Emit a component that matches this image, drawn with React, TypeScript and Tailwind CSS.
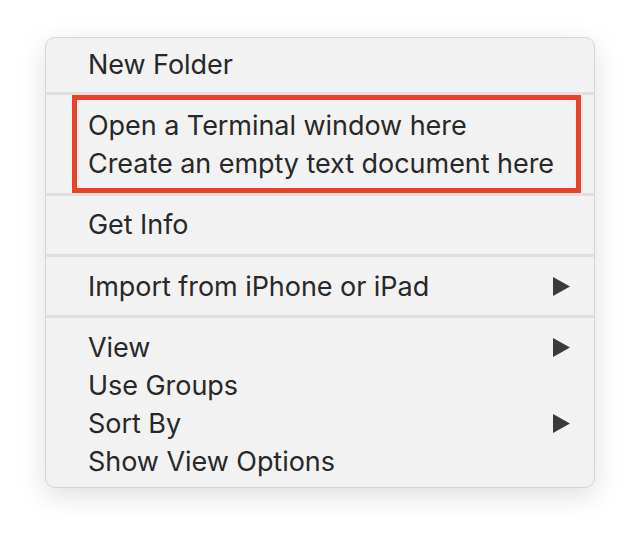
import { type ReactNode } from "react";

const font = { fontFamily: "Inter, 'Noto Sans', sans-serif" };

function Arrow() {
  return (
    <svg width="17" height="19" viewBox="0 0 17 19" className="shrink-0">
      <path d="M0 0 L17 9.5 L0 19 Z" fill="#3a3a3a" />
    </svg>
  );
}

function Item({ label, sub, inBox }: { label: string; sub?: boolean; inBox?: boolean }) {
  return (
    <div
      className={`h-[38px] flex items-center justify-between ${inBox ? "pl-[11px]" : "pl-[42px] pr-[24px]"}`}
    >
      <span className="text-[27px] leading-none text-[#282828] tracking-[-0.05px] whitespace-nowrap">{label}</span>
      {sub && <Arrow />}
    </div>
  );
}

function Separator({ className = "" }: { className?: string }): ReactNode {
  return <div className={`h-[3px] bg-[#e0e0e0] ${className}`} />;
}

export default function App() {
  return (
    <div className="w-[640px] h-[541px] bg-white pt-[37px] pl-[45px]" style={font}>
      <div className="w-[550px] h-[451px] rounded-[10px] border border-[#d6d6d6] bg-[#f2f2f2] pt-[7px] flex flex-col shadow-[0_8px_28px_rgba(0,0,0,0.13)] overflow-hidden">
        <Item label="New Folder" />
        <Separator className="mt-[9px]" />

        {/* highlighted actions */}
        <div className="ml-[26px] mr-[13px] border-[5px] border-[#e8432a] py-[6px]">
          <Item label="Open a Terminal window here" inBox />
          <Item label="Create an empty text document here" inBox />
        </div>

        <Separator />
        <div className="mt-[9px]">
          <Item label="Get Info" />
        </div>
        <Separator className="mt-[11px]" />
        <div className="mt-[10px]">
          <Item label="Import from iPhone or iPad" sub />
        </div>
        <Separator className="mt-[10px]" />
        <div className="mt-[10px]">
          <Item label="View" sub />
          <Item label="Use Groups" />
          <Item label="Sort By" sub />
          <Item label="Show View Options" />
        </div>
      </div>
    </div>
  );
}
